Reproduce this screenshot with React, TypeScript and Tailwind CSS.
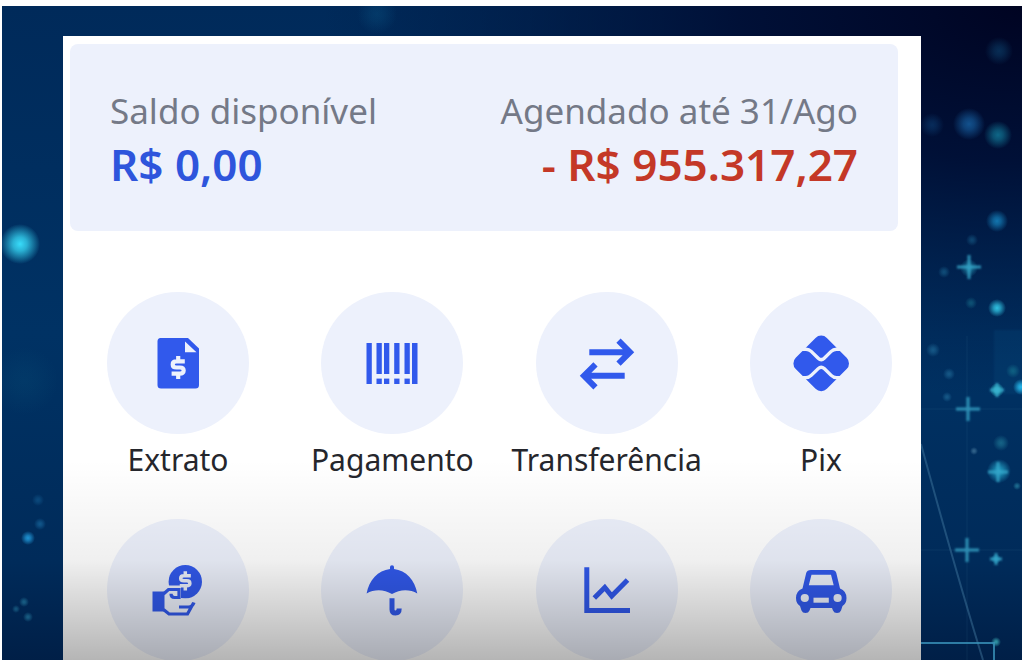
import type { ReactNode } from "react";

const TILE = "#edf1fc";

function DollarMark() {
  return (
    <path
      d="M6 -5.5 H-1.5 Q-5 -5.5 -5 -2.8 Q-5 0 -1.5 0 H1.5 Q5 0 5 2.8 Q5 5.5 1.5 5.5 H-6 M0 -10.5 V-5 M0 5 V10.5"
      fill="none"
      stroke={TILE}
      strokeWidth="3.8"
    />
  );
}

function StatementIcon() {
  return (
    <>
      <path d="M12.5 5 H40 L51 15.5 V52 Q51 55.5 47.5 55.5 H13 Q9.5 55.5 9.5 52 V8.5 Q9.5 5 12.5 5 Z" />
      <path d="M37 8.5 L48.5 19.3 H37 Z" fill={TILE} />
      <g transform="translate(30.2 34.5) scale(1.1)">
        <DollarMark />
      </g>
    </>
  );
}

function BarcodeIcon() {
  return (
    <>
      <path d="M4.5 10 H9.8 V51 H4.5 Z M50 10 H55.5 V51 H50 Z" />
      {[14.5, 22, 32.2, 42.5].map((x) => (
        <g key={x}>
          <rect x={x} y="10" width="5.3" height="31" />
          <rect x={x} y="45.6" width="5.3" height="5.4" />
        </g>
      ))}
    </>
  );
}

function TransferIcon() {
  return (
    <path
      d="M12.3 19.2 H53 M41.5 7.7 L53 19.2 L41.5 30.7 M47.7 42.8 H7 M18.5 31.3 L7 42.8 L18.5 54.3"
      fill="none"
      stroke="currentColor"
      strokeWidth="6"
    />
  );
}

function PixIcon() {
  return (
    <>
      <rect x="8.2" y="8.4" width="44" height="44" rx="8" transform="rotate(45 30.2 30.4)" />
      <path
        d="M8 16.2 H15 Q18 16.2 20.2 18.4 L27.2 25.2 Q30.2 28 33.2 25.2 L40.2 18.4 Q42.400 16.2 45.400 16.2 H52 M8 44.600 H15 Q18 44.600 20.2 42.400 L27.2 35.600 Q30.2 32.800 33.2 35.600 L40.2 42.400 Q42.400 44.600 45.400 44.600 H52"
        fill="none"
        stroke={TILE}
        strokeWidth="3.4"
      />
    </>
  );
}

function LoanIcon() {
  return (
    <>
      <circle cx="37.3" cy="21.7" r="16.7" />
      <g transform="translate(37.3 20.8) scale(0.92)">
        <DollarMark />
      </g>
      <path d="M14 25.5 H33 V38.5 H49 L42 58 H14 Z" fill={TILE} />
      <path d="M4.5 31.5 H16.5 V51.5 H4.5 Z" />
      <path
        d="M15.5 34 L20.5 29.5 H31 V37.5 H26.500 Q23 37.500 23 33.800 M15.5 49.5 L21 54 H39.500 L45.500 43 M46 42.5 Q44.500 47 40.500 47 H31"
        fill="none"
        stroke="currentColor"
        strokeWidth="3.2"
      />
    </>
  );
}

function UmbrellaIcon() {
  return (
    <>
      <path d="M28 9 V7 Q28 5.2 30 5.2 Q32 5.2 32 7 V9 C44 10.5 53 20 55.3 33.5 C48 29 38 29 30 34 C22 29 12 29 4.6 33.5 C7 20 16 10.5 28 9 Z" />
      <path
        d="M30 38.2 V49.5 Q30 53 33.5 53 Q37.2 53 37.2 48.5"
        fill="none"
        stroke="currentColor"
        strokeWidth="5"
      />
    </>
  );
}

function ChartIcon() {
  return (
    <path
      d="M9.8 7.3 V50.5 H53 M17.3 38 L27.8 27.5 L34.7 36 L50.5 20"
      fill="none"
      stroke="currentColor"
      strokeWidth="5"
    />
  );
}

function CarIcon() {
  return (
    <>
      <path
        fillRule="evenodd"
        d="M20 10 H41 Q44.5 10 45.3 13 L49 28.5 Q55.5 31 55.5 38 Q55.5 43.5 51.5 46 L50 50.5 Q49 53 46 53 Q43 53 42 50.5 L41 48 H19.5 L18.5 50.5 Q17.5 53 14.5 53 Q11.5 53 10.5 50.5 L9 46 Q5 43.5 5 38 Q5 31 11.5 28.5 L15.2 13 Q16 10 20 10 Z M20.5 14.7 L17.8 25.3 H42.7 L40 14.7 Z"
      />
      <g fill={TILE}>
        <circle cx="13.8" cy="38" r="4.1" />
        <circle cx="46.6" cy="38" r="4.1" />
        <rect x="22.5" y="37.7" width="15.3" height="5" />
      </g>
    </>
  );
}

type Action = { name: string; icon: ReactNode; labelled: boolean };

const ROWS: Action[][] = [
  [
    { name: "Extrato", icon: <StatementIcon />, labelled: true },
    { name: "Pagamento", icon: <BarcodeIcon />, labelled: true },
    { name: "Transferência", icon: <TransferIcon />, labelled: true },
    { name: "Pix", icon: <PixIcon />, labelled: true },
  ],
  [
    { name: "Empréstimo", icon: <LoanIcon />, labelled: false },
    { name: "Seguros", icon: <UmbrellaIcon />, labelled: false },
    { name: "Investimentos", icon: <ChartIcon />, labelled: false },
    { name: "Veículos", icon: <CarIcon />, labelled: false },
  ],
];

function ActionButton({ name, icon, labelled }: Action) {
  return (
    <button type="button" aria-label={name} className="flex w-[142px] flex-col items-center gap-2">
      <span className="flex size-[142px] items-center justify-center rounded-full bg-[#edf1fc] text-[#3159ec]">
        <svg viewBox="0 0 60 60" className="size-[60px]" fill="currentColor" aria-hidden="true">
          {icon}
        </svg>
      </span>
      {labelled && <span className="text-[30px] leading-9 whitespace-nowrap text-[#25262c]">{name}</span>}
    </button>
  );
}

const GLOWS = [
  { x: 18, y: 238, r: 20, c: "#38dcfa", o: 1 },
  { x: 26, y: 532, r: 7, c: "#229ee0", o: 0.9 },
  { x: 38, y: 518, r: 6, c: "#1c74ac", o: 0.6 },
  { x: 36, y: 494, r: 6, c: "#1c74ac", o: 0.4 },
  { x: 22, y: 596, r: 5, c: "#2a86a8", o: 0.6 },
  { x: 26, y: 611, r: 5, c: "#2a86a8", o: 0.6 },
  { x: 14, y: 603, r: 4, c: "#2a86a8", o: 0.5 },
  { x: 22, y: 375, r: 34, c: "#0a5a80", o: 0.2 },
  { x: 375, y: 8, r: 20, c: "#0b5a8a", o: 0.35 },
  { x: 997, y: 45, r: 14, c: "#0d4672", o: 0.6 },
  { x: 930, y: 119, r: 12, c: "#0c3f74", o: 0.6 },
  { x: 967, y: 118, r: 16, c: "#1762a4", o: 0.8 },
  { x: 996, y: 129, r: 14, c: "#127d9c", o: 0.8 },
  { x: 995, y: 215, r: 11, c: "#147fba", o: 0.9 },
  { x: 970, y: 234, r: 6, c: "#17608c", o: 0.6 },
  { x: 942, y: 266, r: 6, c: "#17608c", o: 0.7 },
  { x: 967, y: 262, r: 9, c: "#2aa0c0", o: 0.7 },
  { x: 995, y: 302, r: 9, c: "#2fc0e0", o: 1 },
  { x: 969, y: 297, r: 6, c: "#17708c", o: 0.6 },
  { x: 931, y: 344, r: 7, c: "#1f6a98", o: 0.7 },
  { x: 947, y: 368, r: 6, c: "#1f6a98", o: 0.7 },
  { x: 945, y: 391, r: 5, c: "#1f6a98", o: 0.7 },
  { x: 1011, y: 365, r: 7, c: "#177c94", o: 0.6 },
  { x: 1019, y: 381, r: 8, c: "#25b8ec", o: 1 },
  { x: 995, y: 384, r: 7, c: "#3fd8e0", o: 1 },
  { x: 999, y: 437, r: 8, c: "#1f7a98", o: 0.7 },
  { x: 972, y: 445, r: 4, c: "#4a7ca0", o: 0.7 },
  { x: 997, y: 465, r: 12, c: "#2ab8dc", o: 0.8 },
  { x: 1015, y: 480, r: 4, c: "#2a8aa8", o: 0.7 },
  { x: 994, y: 553, r: 5, c: "#2ab8dc", o: 0.7 },
  { x: 994, y: 636, r: 5, c: "#3fb8c0", o: 0.8 },
];

const SPARKS = [
  { x: 967, y: 261, r: 12 },
  { x: 966, y: 403, r: 12 },
  { x: 995, y: 384, r: 7 },
  { x: 996, y: 466, r: 10 },
  { x: 965, y: 544, r: 12 },
  { x: 994, y: 553, r: 6 },
];

function Backdrop() {
  return (
    <svg
      viewBox="0 0 1020 654"
      preserveAspectRatio="none"
      className="absolute inset-0 size-full"
      aria-hidden="true"
    >
      <defs>
        <linearGradient id="base" x1="0" y1="0" x2="0" y2="1">
          <stop offset="0" stopColor="#002a5a" />
          <stop offset="0.5" stopColor="#003264" />
          <stop offset="0.85" stopColor="#002b5a" />
          <stop offset="1" stopColor="#001f47" />
        </linearGradient>
        <radialGradient
          id="shade"
          gradientUnits="userSpaceOnUse"
          cx="0"
          cy="0"
          r="1"
          gradientTransform="translate(1020 0) scale(700 390)"
        >
          <stop offset="0" stopColor="#000422" />
          <stop offset="0.4" stopColor="#000b30" stopOpacity="0.85" />
          <stop offset="1" stopColor="#00143c" stopOpacity="0" />
        </radialGradient>
        {GLOWS.map((g, i) => (
          <radialGradient key={i} id={`glow${i}`}>
            <stop offset="0" stopColor={g.c} stopOpacity={g.o} />
            <stop offset="0.35" stopColor={g.c} stopOpacity={g.o * 0.75} />
            <stop offset="1" stopColor={g.c} stopOpacity="0" />
          </radialGradient>
        ))}
        <filter id="soft" x="-10%" y="-10%" width="120%" height="120%">
          <feGaussianBlur stdDeviation="1" />
        </filter>
      </defs>
      <rect width="1020" height="654" fill="url(#base)" />
      <rect width="1020" height="654" fill="url(#shade)" />
      <rect x="992" y="324" width="28" height="64" fill="#0a5a90" opacity="0.18" filter="url(#soft)" />
      {GLOWS.map((g, i) => (
        <circle key={i} cx={g.x} cy={g.y} r={g.r} fill={`url(#glow${i})`} />
      ))}
      <g stroke="#39a9cc" strokeWidth="3" opacity="0.8" filter="url(#soft)">
        {SPARKS.map((s) => (
          <path key={`${s.x}-${s.y}`} d={`M${s.x - s.r} ${s.y} h${s.r * 2} M${s.x} ${s.y - s.r} v${s.r * 2}`} />
        ))}
      </g>
      <g fill="none" stroke="#4d86ac">
        <path d="M919 438 Q955 570 981 654" strokeWidth="2" opacity="0.4" />
        <path d="M919 403 H1020 M919 544 H1020 M965 330 V654" opacity="0.12" />
        <path d="M919 637 H992 V654" stroke="#3a94ba" strokeWidth="2" opacity="0.8" />
      </g>
    </svg>
  );
}

export default function App() {
  return (
    <div className="flex h-screen overflow-hidden bg-white px-0.5 pt-1.5 font-['Noto_Sans',sans-serif]">
      <div className="relative flex flex-1 overflow-hidden bg-[#002b5a] pt-[30px] pr-[101px] pl-[61px]">
        <Backdrop />
        <main className="relative flex-1 overflow-hidden bg-white pt-2">
          <section className="mr-[23px] ml-[7px] flex justify-between rounded-lg bg-[#edf1fc] px-10 pt-11 pb-[37px]">
            <div>
              <p className="text-[35px] leading-[46px] text-[#747987]">Saldo disponível</p>
              <p className="text-[44px] leading-[60px] font-semibold text-[#2e55dc]">R$ 0,00</p>
            </div>
            <div className="text-right">
              <p className="text-[35px] leading-[46px] text-[#747987]">Agendado até 31/Ago</p>
              <p className="text-[44px] leading-[60px] font-semibold text-[#c43827]">- R$ 955.317,27</p>
            </div>
          </section>
          <nav aria-label="Serviços" className="mt-[61px] flex flex-col gap-[41px] pr-[29px] pl-11">
            {ROWS.map((row) => (
              <div key={row[0].name} className="flex justify-between">
                {row.map((action) => (
                  <ActionButton key={action.name} {...action} />
                ))}
              </div>
            ))}
          </nav>
          <div className="pointer-events-none absolute inset-x-0 bottom-0 h-[200px] bg-linear-to-b from-black/0 via-black/6 to-black/29" />
        </main>
      </div>
    </div>
  );
}
